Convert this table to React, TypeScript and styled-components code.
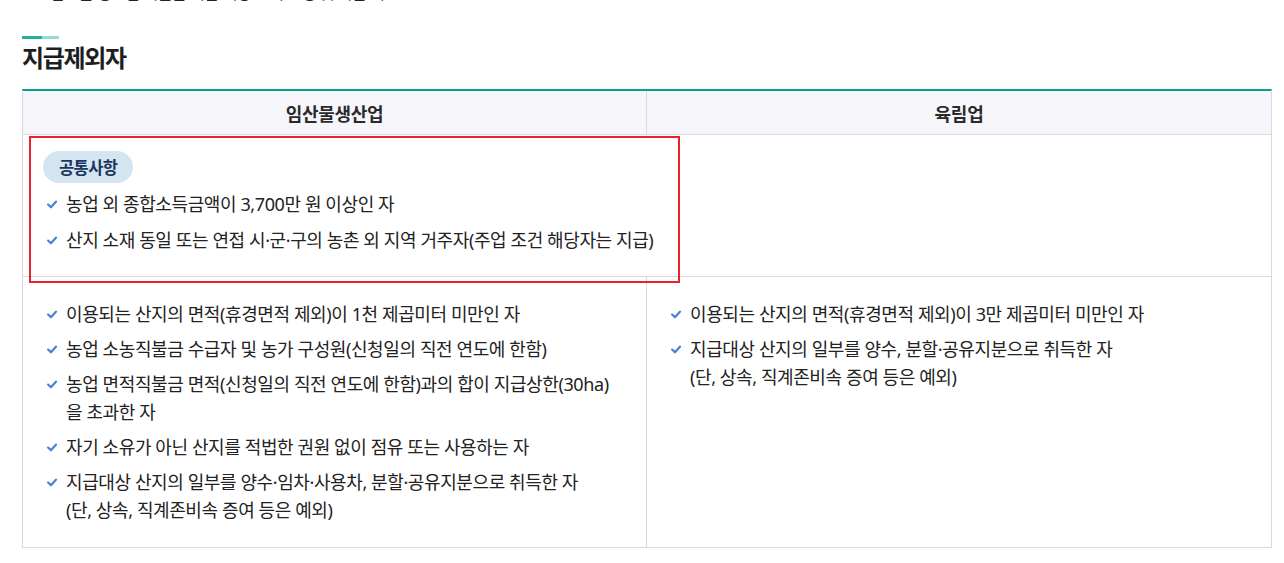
import React from "react";
import styled, { createGlobalStyle } from "styled-components";

const Global = createGlobalStyle`
  html, body { margin: 0; padding: 0; background: #fff; }
  body {
    font-family: "Noto Sans", "Noto Sans CJK KR", sans-serif;
    color: #222;
    overflow: hidden;
  }
`;

const Page = styled.div`
  padding: 0 12px 0 22px;
  width: 1250px;
`;

const CutLine = styled.p`
  margin: -19px 0 0 28px;
  font-size: 16px;
  line-height: 24px;
  letter-spacing: -0.4px;
  color: #222;
`;

const Accent = styled.div`
  display: flex;
  margin-top: 31px;
  height: 3px;
  width: 37px;
`;

const AccentPart = styled.span<{ $light?: boolean; $w: number }>`
  display: block;
  width: ${(p) => p.$w}px;
  height: 100%;
  background: ${(p) => (p.$light ? "#93dcd2" : "#22b09a")};
`;

const Title = styled.h3`
  margin: 2px 0 0;
  font-size: 24px;
  line-height: 34px;
  font-weight: 700;
  letter-spacing: -1.3px;
  color: #1e1e1e;
`;

const Table = styled.div`
  position: relative;
  margin-top: 14px;
  display: grid;
  grid-template-columns: 624px 1fr;
  border-top: 2px solid #079f8c;
  border-left: 1px solid #d9d9df;
  border-right: 1px solid #d9d9df;
`;

const Head = styled.div<{ $last?: boolean }>`
  height: 43px;
  display: flex;
  align-items: center;
  justify-content: center;
  background: #f6f6fa;
  border-bottom: 1px solid #d9d9df;
  border-right: ${(p) => (p.$last ? "none" : "1px solid #d9d9df")};
  font-size: 18px;
  font-weight: 700;
  letter-spacing: -0.3px;
  color: #2a2a2a;
`;

const Cell = styled.div<{ $last?: boolean; $span?: boolean; $h: number; $top: number }>`
  box-sizing: border-box;
  grid-column: ${(p) => (p.$span ? "1 / -1" : "auto")};
  height: ${(p) => p.$h}px;
  padding: ${(p) => p.$top}px 20px 0 20px;
  border-bottom: 1px solid #d9d9df;
  border-right: ${(p) => (p.$last || p.$span ? "none" : "1px solid #d9d9df")};
`;

const Badge = styled.span`
  display: inline-flex;
  align-items: center;
  height: 32px;
  padding: 0 16px;
  border-radius: 16px;
  background: #d3e5f1;
  color: #1b3560;
  font-size: 16.5px;
  font-weight: 700;
  letter-spacing: -0.6px;
`;

const List = styled.ul<{ $gap: number; $top?: number }>`
  list-style: none;
  margin: ${(p) => p.$top ?? 0}px 0 0;
  padding: 0 0 0 4px;
  display: flex;
  flex-direction: column;
  gap: ${(p) => p.$gap}px;
`;

const Item = styled.li`
  display: flex;
  align-items: flex-start;
  gap: 9px;
  font-size: 18px;
  line-height: 28px;
  letter-spacing: -0.4px;
  color: #222;
`;

const CheckBox = styled.span`
  flex: none;
  width: 10px;
  height: 28px;
  display: flex;
  align-items: center;
`;

const Highlight = styled.div`
  position: absolute;
  left: 6px;
  top: 45px;
  width: 647px;
  height: 143px;
  border: 2px solid #e8222c;
  pointer-events: none;
`;

const Check = () => (
  <CheckBox>
    <svg width="11" height="9" viewBox="0 0 11 9">
      <polyline
        points="1.2,4.6 4.3,7.6 9.8,1.4"
        fill="none"
        stroke="#4a7fda"
        strokeWidth="2.4"
        strokeLinecap="round"
        strokeLinejoin="round"
      />
    </svg>
  </CheckBox>
);

const Li = ({ children }: { children: React.ReactNode }) => (
  <Item>
    <Check />
    <span>{children}</span>
  </Item>
);

export default function App() {
  return (
    <>
      <Global />
      <Page>
        <CutLine>임산물 생산업 직불금 지급 대상 면적 산정 및 지급 기준</CutLine>
        <Accent>
          <AccentPart $w={20} />
          <AccentPart $w={17} $light />
        </Accent>
        <Title>지급제외자</Title>
        <Table>
          <Head>임산물생산업</Head>
          <Head $last>육림업</Head>

          <Cell $span $h={142} $top={16}>
            <Badge>공통사항</Badge>
            <List $gap={8} $top={7}>
              <Li>농업 외 종합소득금액이 3,700만 원 이상인 자</Li>
              <Li>산지 소재 동일 또는 연접 시·군·구의 농촌 외 지역 거주자(주업 조건 해당자는 지급)</Li>
            </List>
          </Cell>

          <Cell $h={271} $top={23}>
            <List $gap={7}>
              <Li>이용되는 산지의 면적(휴경면적 제외)이 1천 제곱미터 미만인 자</Li>
              <Li>농업 소농직불금 수급자 및 농가 구성원(신청일의 직전 연도에 한함)</Li>
              <Li>
                농업 면적직불금 면적(신청일의 직전 연도에 한함)과의 합이 지급상한(30ha)
                <br />을 초과한 자
              </Li>
              <Li>자기 소유가 아닌 산지를 적법한 권원 없이 점유 또는 사용하는 자</Li>
              <Li>
                지급대상 산지의 일부를 양수·임차·사용차, 분할·공유지분으로 취득한 자
                <br />
                (단, 상속, 직계존비속 증여 등은 예외)
              </Li>
            </List>
          </Cell>
          <Cell $last $h={271} $top={23}>
            <List $gap={7}>
              <Li>이용되는 산지의 면적(휴경면적 제외)이 3만 제곱미터 미만인 자</Li>
              <Li>
                지급대상 산지의 일부를 양수, 분할·공유지분으로 취득한 자
                <br />
                (단, 상속, 직계존비속 증여 등은 예외)
              </Li>
            </List>
          </Cell>
          <Highlight />
        </Table>
      </Page>
    </>
  );
}
